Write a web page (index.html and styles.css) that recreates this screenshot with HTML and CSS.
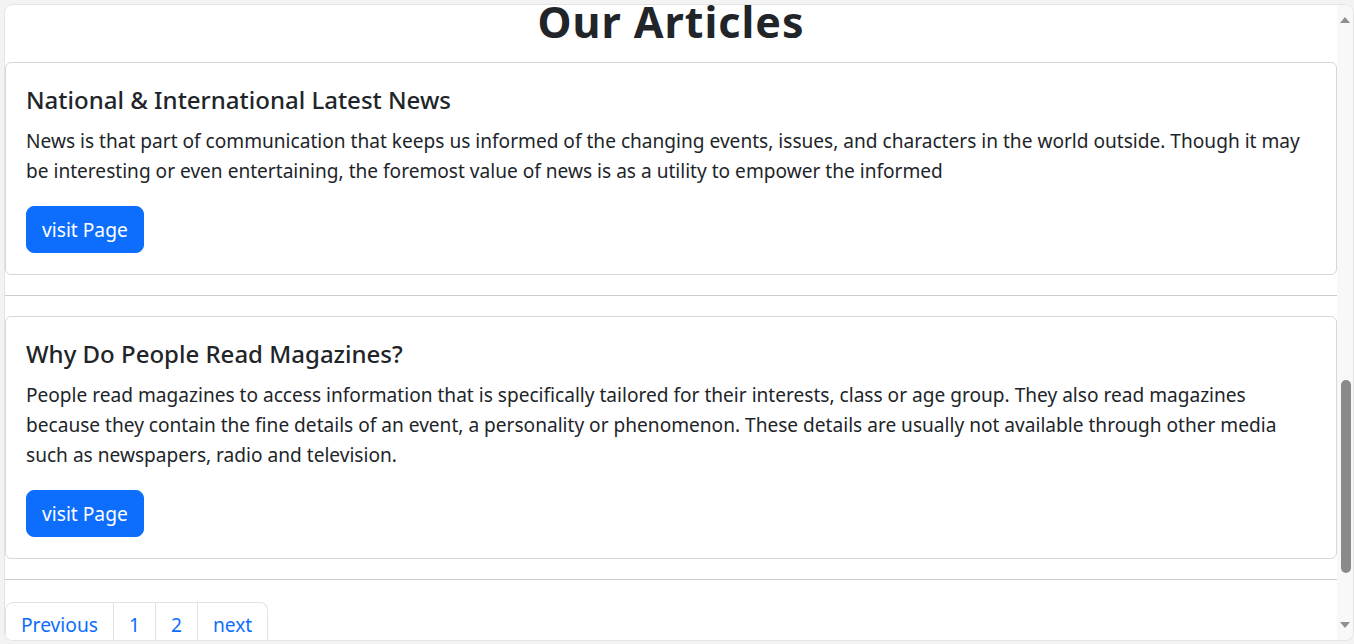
FILE: index.html
```html
<!DOCTYPE html>
<html lang="en">
<head>
<meta charset="utf-8">
<title>Our Articles</title>
<link rel="stylesheet" href="styles.css">
</head>
<body>
<div class="window">
  <div class="viewport">
    <div class="page">
      <h1 class="page-title">Our Articles</h1>

      <div class="card">
        <h4 class="card-title">National &amp; International Latest News</h4>
        <p class="card-text">News is that part of communication that keeps us informed of the changing events, issues, and characters in the world outside. Though it may be interesting or even entertaining, the foremost value of news is as a utility to empower the informed</p>
        <a class="btn" href="#">visit Page</a>
      </div>

      <hr class="divider">

      <div class="card">
        <h4 class="card-title">Why Do People Read Magazines?</h4>
        <p class="card-text">People read magazines to access information that is specifically tailored for their interests, class or age group. They also read magazines because they contain the fine details of an event, a personality or phenomenon. These details are usually not available through other media such as newspapers, radio and television.</p>
        <a class="btn" href="#">visit Page</a>
      </div>

      <hr class="divider">

      <nav class="pager">
        <a class="page-link first" href="#">Previous</a>
        <a class="page-link" href="#">1</a>
        <a class="page-link" href="#">2</a>
        <a class="page-link last" href="#">next</a>
      </nav>
    </div>
  </div>
  <div class="scrollbar">
    <svg class="arrow up" width="16" height="16" viewBox="0 0 16 16"><polygon points="3,11 13,11 8,5" fill="#8f8f8f"/></svg>
    <div class="track"><div class="thumb"></div></div>
    <svg class="arrow down" width="16" height="16" viewBox="0 0 16 16"><polygon points="3,5 13,5 8,11" fill="#8f8f8f"/></svg>
  </div>
</div>
</body>
</html>
```
FILE: styles.css
```css
* { box-sizing: border-box; }

html, body {
  margin: 0;
  height: 100%;
}

body {
  background: #f3f3f3;
  font-family: "Noto Sans", "Open Sans", sans-serif;
  color: #212529;
  padding: 5px 1px 4px 5px;
}

.window {
  display: flex;
  height: 635px;
  width: 1348px;
  background: #ffffff;
  border-radius: 8px;
  box-shadow: 0 0 0 1px #e4e4e4;
  overflow: hidden;
}

.viewport {
  flex: 1;
  overflow: hidden;
}

.page {
  padding-top: 2px;
}

.page-title {
  margin: 0 0 25px;
  text-align: center;
  font-size: 43px;
  font-weight: 700;
  line-height: 30px;
  letter-spacing: 1px;
}

.card {
  border: 1px solid #d7d7d7;
  border-radius: 6px;
  padding: 22px 20px 21px;
  background: #fff;
}

.card-title {
  margin: 0 0 12px;
  font-size: 24px;
  font-weight: 500;
  line-height: 29px;
}

.card-text {
  margin: 0 0 20px;
  font-size: 19.1px;
  line-height: 30px;
}

.btn {
  display: inline-block;
  background: #0d6efd;
  border: 1px solid #0d6efd;
  color: #fff;
  text-decoration: none;
  font-size: 19.2px;
  line-height: 29px;
  padding: 8px 15px;
  border-radius: 8px;
}

.divider {
  margin: 20px 0;
  border: 0;
  border-top: 1px solid #cdcdcd;
  height: 0;
}

.pager {
  display: flex;
  margin-top: 22px;
}

.page-link {
  display: block;
  color: #0d6efd;
  text-decoration: none;
  font-size: 19.2px;
  line-height: 30px;
  padding: 7px 15px 9px;
  border: 1px solid #dee2e6;
  border-left: 0;
  background: #fff;
}

.page-link.first {
  border-left: 1px solid #dee2e6;
  border-top-left-radius: 8px;
  border-bottom-left-radius: 8px;
}

.page-link.last {
  border-top-right-radius: 8px;
  border-bottom-right-radius: 8px;
}

.scrollbar {
  width: 16px;
  flex: none;
  background: #f8f8f8;
  display: flex;
  flex-direction: column;
}

.arrow {
  display: block;
  flex: none;
}

.arrow.up {
  margin-top: 7px;
}

.arrow.down {
  margin-bottom: 7px;
}

.track {
  flex: 1;
  padding: 352px 1px 0 4px;
}

.thumb {
  height: 193px;
  width: 10px;
  border-radius: 5px;
  background: #8a8a8a;
}
```
